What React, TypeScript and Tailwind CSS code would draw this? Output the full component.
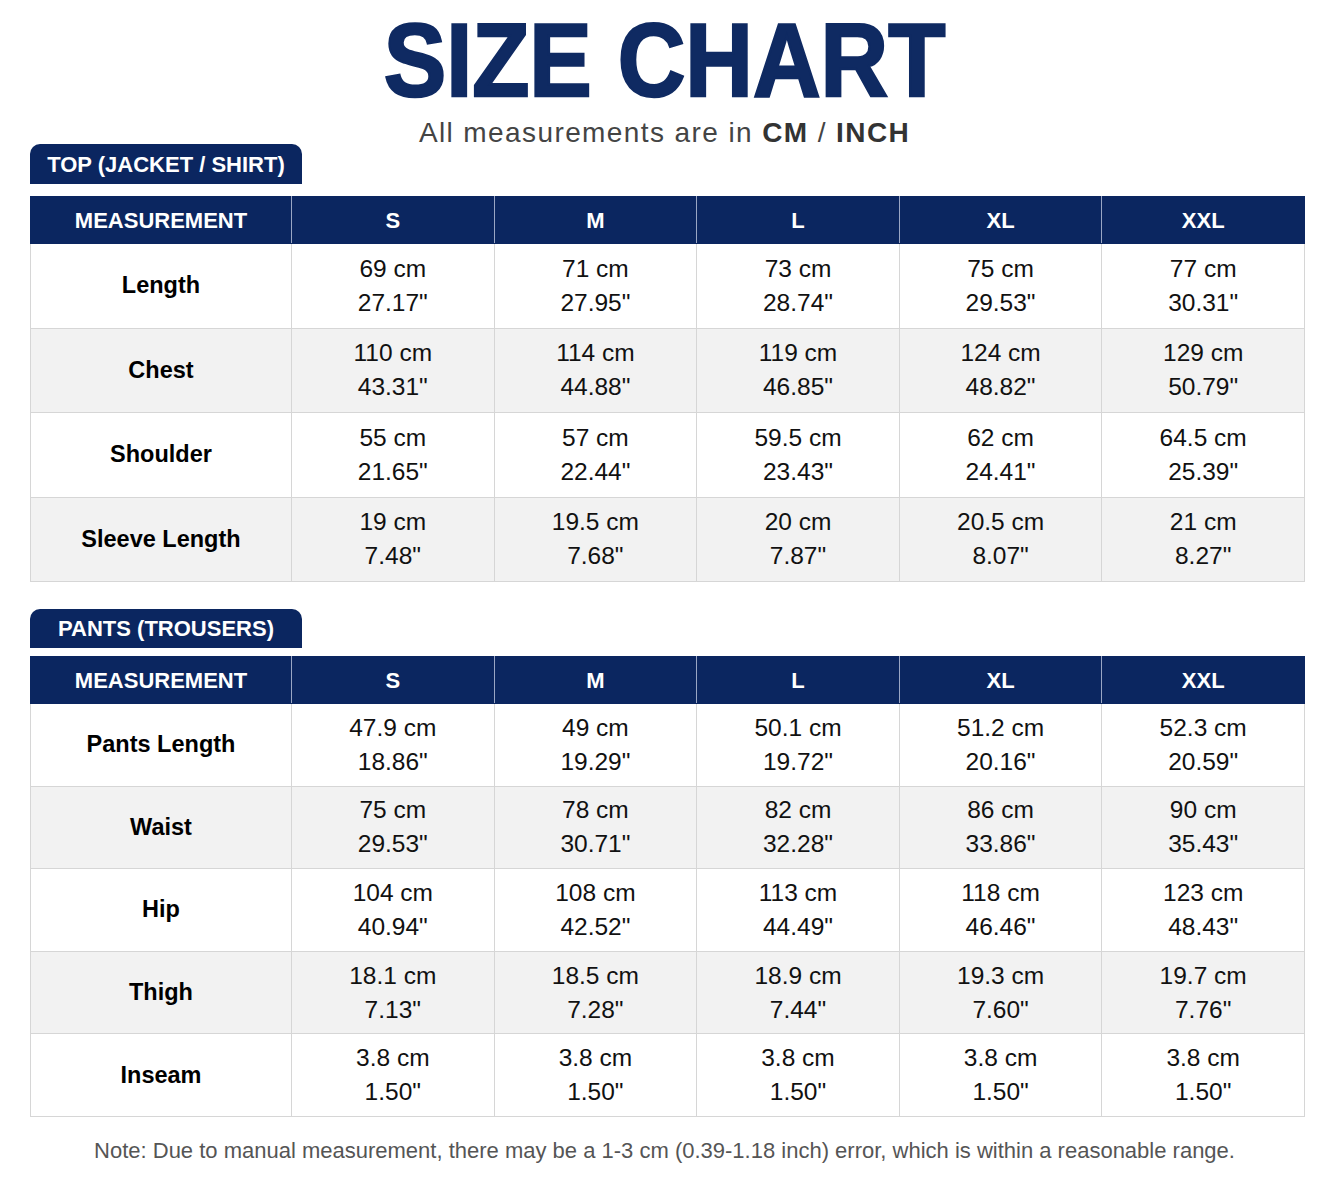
const sizes = ['S', 'M', 'L', 'XL', 'XXL'];

type Row = { label: string; values: [string, string][] };

const topRows: Row[] = [
  { label: 'Length', values: [['69 cm', '27.17"'], ['71 cm', '27.95"'], ['73 cm', '28.74"'], ['75 cm', '29.53"'], ['77 cm', '30.31"']] },
  { label: 'Chest', values: [['110 cm', '43.31"'], ['114 cm', '44.88"'], ['119 cm', '46.85"'], ['124 cm', '48.82"'], ['129 cm', '50.79"']] },
  { label: 'Shoulder', values: [['55 cm', '21.65"'], ['57 cm', '22.44"'], ['59.5 cm', '23.43"'], ['62 cm', '24.41"'], ['64.5 cm', '25.39"']] },
  { label: 'Sleeve Length', values: [['19 cm', '7.48"'], ['19.5 cm', '7.68"'], ['20 cm', '7.87"'], ['20.5 cm', '8.07"'], ['21 cm', '8.27"']] },
];

const pantsRows: Row[] = [
  { label: 'Pants Length', values: [['47.9 cm', '18.86"'], ['49 cm', '19.29"'], ['50.1 cm', '19.72"'], ['51.2 cm', '20.16"'], ['52.3 cm', '20.59"']] },
  { label: 'Waist', values: [['75 cm', '29.53"'], ['78 cm', '30.71"'], ['82 cm', '32.28"'], ['86 cm', '33.86"'], ['90 cm', '35.43"']] },
  { label: 'Hip', values: [['104 cm', '40.94"'], ['108 cm', '42.52"'], ['113 cm', '44.49"'], ['118 cm', '46.46"'], ['123 cm', '48.43"']] },
  { label: 'Thigh', values: [['18.1 cm', '7.13"'], ['18.5 cm', '7.28"'], ['18.9 cm', '7.44"'], ['19.3 cm', '7.60"'], ['19.7 cm', '7.76"']] },
  { label: 'Inseam', values: [['3.8 cm', '1.50"'], ['3.8 cm', '1.50"'], ['3.8 cm', '1.50"'], ['3.8 cm', '1.50"'], ['3.8 cm', '1.50"']] },
];

function SizeTable({ title, rows, rowH, tabH, gap }: { title: string; rows: Row[]; rowH: string; tabH: string; gap: string }) {
  return (
    <div>
      {/* Tab */}
      <div className={`flex w-[272px] items-center justify-center rounded-t-[10px] bg-[#0b2660] text-[22px] font-bold text-white ${tabH}`}>
        {title}
      </div>

      <table className={`w-[1275px] table-fixed border-collapse ${gap}`}>
        <colgroup>
          <col className="w-[261px]" />
          <col />
          <col />
          <col />
          <col />
          <col />
        </colgroup>
        <thead>
          <tr className="h-[47px] bg-[#0b2660] text-[22px] font-bold text-white">
            <th className="border border-[#0b2660] border-r-[#9aa6c4] font-bold">MEASUREMENT</th>
            {sizes.map((s, i) => (
              <th
                key={s}
                className={i === sizes.length - 1 ? 'border border-[#0b2660] font-bold' : 'border border-[#0b2660] border-r-[#9aa6c4] font-bold'}
              >
                {s}
              </th>
            ))}
          </tr>
        </thead>
        <tbody>
          {rows.map((row, r) => (
            <tr key={row.label} className={`${rowH} ${r % 2 === 1 ? 'bg-[#f2f2f2]' : 'bg-white'}`}>
              <td className="border border-[#d6d6d6] text-center text-[23.5px] font-bold text-black">{row.label}</td>
              {row.values.map(([cm, inch], i) => (
                <td key={i} className="border border-[#d6d6d6] text-center text-[24.5px] leading-[34px] text-[#111]">
                  <div>{cm}</div>
                  <div>{inch}</div>
                </td>
              ))}
            </tr>
          ))}
        </tbody>
      </table>
    </div>
  );
}

export default function App() {
  return (
    <div className="min-h-[1183px] w-[1329px] bg-white font-['Liberation_Sans',Arial,sans-serif]">
      {/* Title */}
      <div className="pt-[8px] text-center">
        <h1 className="scale-x-90 text-[104px] leading-[104px] font-bold text-[#0f2a62] [-webkit-text-stroke:2.5px_#0f2a62]">
          SIZE CHART
        </h1>
        <p className="mt-[7px] text-[28px] leading-[28px] tracking-[1.4px] text-[#444]">
          All measurements are in <span className="font-bold text-[#333]">CM</span> /{' '}
          <span className="font-bold text-[#333]">INCH</span>
        </p>
      </div>

      <div className="-mt-[3px] ml-[30px] flex flex-col gap-[27px]">
        <SizeTable title="TOP (JACKET / SHIRT)" rows={topRows} rowH="h-[84.5px]" tabH="h-[40px]" gap="mt-[12px]" />
        <SizeTable title="PANTS (TROUSERS)" rows={pantsRows} rowH="h-[82.6px]" tabH="h-[39px]" gap="mt-[8px]" />
      </div>

      {/* Note */}
      <p className="mt-[22px] text-center text-[22px] leading-[24px] text-[#555]">
        Note: Due to manual measurement, there may be a 1-3 cm (0.39-1.18 inch) error, which is within a reasonable range.
      </p>
    </div>
  );
}
